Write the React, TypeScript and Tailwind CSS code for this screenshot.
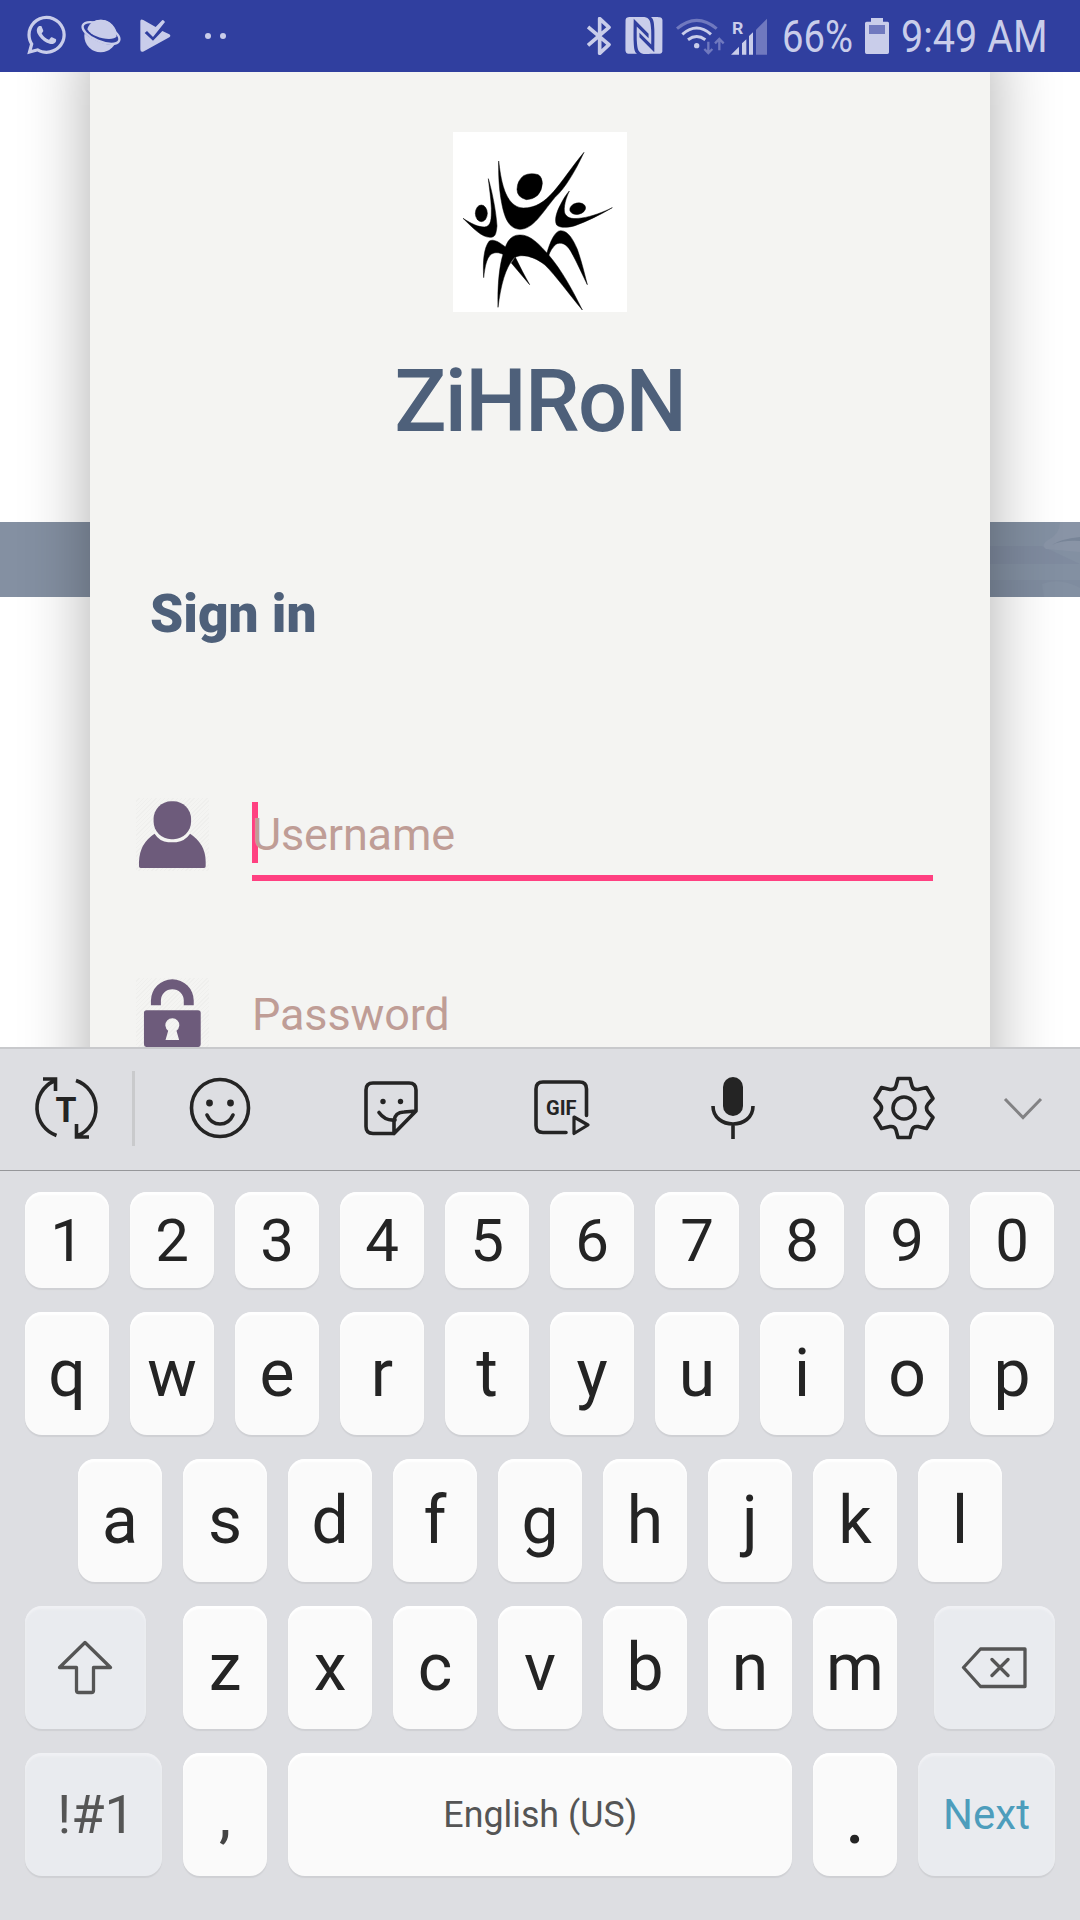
import React from "react";
import { FaWhatsapp } from "react-icons/fa";
import { SiNfc } from "react-icons/si";

const INK = "#242424";
const LIGHT = "#c9cdea";
const DIM = "#7079bf";

/* ---------- status bar ---------- */

function StatusBar() {
  return (
    <header className="flex h-[72px] w-full shrink-0 items-center bg-[#303f9f] text-[#c9cdea]">
      <FaWhatsapp className="ml-[26px] h-[44px] w-[41px] shrink-0 -translate-y-px" />
      <svg className="ml-[13px] h-[34px] w-[42px] shrink-0" viewBox="240 53 126 102">
        <circle cx="302" cy="104" r="49" fill={LIGHT} />
        <ellipse cx="303" cy="98" rx="63" ry="24" transform="rotate(22 303 98)" fill="#303f9f" />
        <path d="M264 78 C275 50 330 43 344 85 L350 105 C340 122 275 110 262 84Z" fill={LIGHT} />
        <ellipse cx="303" cy="95" rx="59" ry="25" transform="rotate(23 303 95)" fill="none" stroke={LIGHT} strokeWidth="7" pathLength="100" strokeDasharray="63 25 12" />
      </svg>
      <svg className="ml-[18px] h-[34px] w-[31px] shrink-0" viewBox="422 55 93 102">
        <path d="M423 62 Q423 53 432 58 L469 79 L487 60 Q491 55 497 64 L461 109 L443 91 L436 97 L461 120 L489 91 L510 101 Q516 105 510 110 L434 152 Q423 157 423 146Z" fill={LIGHT} stroke="none" />
      </svg>
      <div className="ml-[34px] flex gap-[9px]">
        <span className="size-[6px] rounded-full bg-[#c9cdea]" />
        <span className="size-[6px] rounded-full bg-[#c9cdea]" />
      </div>
      <svg className="ml-[361px] h-[38px] w-[24px] shrink-0" viewBox="83 47 72 114">
        <path d="M86 77 L149 130 L121 156 V52 L149 78 L86 132" fill="none" stroke={LIGHT} strokeWidth="11" strokeLinejoin="round" />
      </svg>
      <SiNfc className="ml-[14px] h-[37px] w-[38px] shrink-0 -translate-y-px" />
      <svg className="ml-[13px] h-[37px] w-[49px] shrink-0" viewBox="350 46 147 111">
        <path d="M353 78 Q412 28 472 78" fill="none" stroke={DIM} strokeWidth="9" />
        <path d="M369 95 Q412 57 455 95 M386 111 Q412 92 438 111" fill="none" stroke={LIGHT} strokeWidth="9" />
        <circle cx="412" cy="129" r="8" fill={LIGHT} />
        <path d="M447 117 V149 M435 139 L447 151 L459 139 M480 143 V110 M467 122 L480 109 L493 122" fill="none" stroke={DIM} strokeWidth="7" />
      </svg>
      <svg className="ml-[6px] h-[37px] w-[36px] shrink-0" viewBox="513 46 108 111">
        <path d="M513 156 L537 132 V156Z M546 122 L559 110 V156 H546Z M567 100 L579 89 V156 H567Z" fill={LIGHT} />
        <path d="M588 81 L621 48 V156 H588Z" fill={DIM} />
        <text x="516" y="94" fontFamily="Roboto" fontWeight="700" fontSize="52" textLength="34" lengthAdjust="spacingAndGlyphs" fill={LIGHT}>R</text>
      </svg>
      <span className="ml-[15px] w-[74px] shrink-0 whitespace-nowrap text-[45px] leading-[72px]">
        <span className="inline-block origin-left translate-y-px scale-x-[0.85]">66%</span>
      </span>
      <svg className="ml-[9px] h-[36px] w-[24px] shrink-0" viewBox="915 51 72 108">
        <path d="M933 51 H969 V62 H983 Q987 62 987 67 V154 Q987 159 982 159 H920 Q915 159 915 154 V67 Q915 62 920 62 H933Z" fill={LIGHT} />
        <rect x="927" y="72" width="48" height="27" fill={DIM} />
      </svg>
      <span className="ml-[12px] shrink-0 whitespace-nowrap text-[45px] leading-[72px]">
        <span className="inline-block origin-left translate-y-px scale-x-[0.88]">9:49 AM</span>
      </span>
    </header>
  );
}

/* ---------- sign-in card ---------- */

function Logo() {
  return (
    <svg className="h-[180px] w-[174px] bg-white" viewBox="39 36 522 540" fill="#000" stroke="#000" strokeWidth="1.500">
      <path d="M251 167 Q270 157 295 164 Q307 172 307 190 Q306 212 293 226 Q278 239 259 239 Q231 232 231 208 Q232 181 251 167Z" />
      <path d="M176 123 C182 170 192 262 250 264 C325 264 355 190 432 97 C405 155 375 205 345 232 C305 280 280 327 240 328 C200 326 190 280 182 232 C177 200 175 160 176 123Z" />
      <ellipse cx="124" cy="280" rx="18" ry="25" />
      <path d="M145 176 C155 210 168 270 171 318 C168 345 165 352 150 352 C125 352 100 325 69 295 C95 312 115 321 133 321 C155 320 154 295 154 265 C153 235 148 205 145 176Z" />
      <ellipse cx="413" cy="266" rx="24" ry="17" transform="rotate(-12 413 266)" />
      <path d="M388 213 C372 245 370 275 376 283 C385 297 400 297 425 294 C455 290 490 276 517 263 C480 285 440 304 405 317 C385 323 360 325 350 315 C342 300 350 275 362 253 C370 237 378 224 388 213Z" />
      <path d="M131 473 C128 420 132 385 147 364 C160 354 180 368 199 383 L191 404 C180 398 170 397 162 399 C140 404 135 440 131 473Z" />
      <path d="M214 429 L226 412 C240 440 255 470 269 494Z" />
      <path d="M174 562 C172 500 178 430 192 395 C200 362 215 345 238 345 C270 342 300 375 326 405 C365 450 400 515 427 570 C385 520 350 470 315 435 C285 410 245 400 225 412 C195 440 182 500 174 562Z" />
      <path d="M320 402 C330 365 345 332 362 332 C385 332 400 360 412 388 C425 425 432 455 442 494 C425 460 410 425 393 395 C380 370 360 365 348 373 C337 382 330 395 326 407Z" />
    </svg>
  );
}

const HATCH = "shrink-0 bg-[repeating-linear-gradient(135deg,#f4f4f2_0px,#f4f4f2_2px,#efefed_2px,#efefed_3px)]";

function PersonIcon() {
  return (
    <svg className={`${HATCH} h-[73px] w-[73px]`} viewBox="78 53 220 220" fill="#6d5b7b">
      <path d="M131 161 Q150 189 175 189 H200 Q225 187 244 161 L220 130 H150Z" fill="#f4f4f2" />
      <rect x="131" y="63" width="113" height="114" rx="53" />
      <path d="M134 161 Q150 186 175 186 H200 Q225 184 241 161 Q288 192 288 245 V259 Q288 264 283 264 H92 Q87 264 87 259 V245 Q89 190 134 161Z" />
    </svg>
  );
}

function LockIcon() {
  return (
    <svg className={`${HATCH} h-[73px] w-[73px]`} viewBox="78 593 220 220" fill="#6d5b7b">
      <path d="M123 675 V661 A64.500 64 0 0 1 252 661 V675 H222 V661 A34.500 34 0 0 0 153 661 V675Z" />
      <path
        fillRule="evenodd"
        d="M110 690 H265 Q273 690 273 698 V793 Q273 801 265 801 H110 Q102 801 102 793 V698 Q102 690 110 690Z M175 752 L167 780 H208 L200 752 A21 21 0 1 0 175 752Z"
      />
    </svg>
  );
}

function SignInScreen() {
  return (
    <main className="relative flex h-[975px] w-full shrink-0 justify-center overflow-hidden bg-white">
      <svg className="absolute left-0 top-[450px] h-[75px] w-full" viewBox="0 0 1080 75">
        <rect width="1080" height="75" fill="#8490a2" />
        <path d="M900 0 H1080 V75 H900Z" fill="#8390a2" />
        <path d="M900 24 H1042 L1080 42 H900Z" fill="#7f8b9f" />
        <path d="M900 58 H1080 V75 H900Z" fill="#7f8c9f" />
        <path d="M1060 0 H1080 V30 L1046 27 Q1040 23 1048 18 Q1060 12 1060 0Z" fill="#8994a6" />
        <path d="M1052 23 Q1060 17 1080 15 V19 Q1062 18 1052 23Z" fill="#788598" />
        <path d="M1042 62 Q1060 55 1080 66 V75 H1044Z" fill="#8390a2" />
      </svg>
      <section className="relative flex h-[1180px] w-[900px] -translate-y-[40px] flex-col bg-[#f4f4f2] pt-[100px] shadow-[0_0_64px_rgba(0,0,0,0.32)]">
        <div className="flex flex-col items-center">
          <Logo />
          <h1 className="ml-[-1px] mt-[37px] scale-x-[0.985] text-[88px] font-medium leading-[104px] tracking-[-1.7px] text-[#4e607a]">ZiHRoN</h1>
        </div>
        <h2 className="ml-[60px] mt-[129px] origin-left scale-x-[0.985] text-[54px] font-black leading-[64px] text-[#4e607a]">Sign in</h2>
        <div className="ml-[46px] mt-[152px] flex h-[83px]">
          <PersonIcon />
          <div className="relative ml-[43px] h-[83px] w-[681px] border-b-[6px] border-[#ff4081]">
            <div className="absolute left-0 top-[4px] h-[61px] w-[6px] bg-[#ff4081]" />
            <span className="relative block text-[45px] leading-[73px] tracking-[-0.15px] text-[#bf9d96]">Username</span>
          </div>
        </div>
        <div className="ml-[46px] mt-[97px] flex h-[73px]">
          <LockIcon />
          <span className="ml-[43px] text-[45px] leading-[73px] tracking-[-0.15px] text-[#bf9d96]">Password</span>
        </div>
      </section>
    </main>
  );
}

/* ---------- keyboard ---------- */

function Toolbar() {
  const line = { fill: "none", stroke: INK, strokeWidth: 3.6 } as const;
  return (
    <div className="flex h-[124px] w-full items-center border-b border-t-2 border-b-[#96979a] border-t-[#c8c9cc] pb-[3px]">
      <svg className="ml-[32px] h-[70px] w-[68px]" viewBox="32 1074 68 70">
        <path {...line} d="M56.500 1136.500 A29.500 29.500 0 0 1 54 1082 M43 1080 H55.500 V1092 M76 1081.500 A29.500 29.500 0 0 1 78 1136.500 M76.500 1125 V1138 H89" />
        <text x="55.500" y="1122.500" fontFamily="Roboto" fontWeight="700" fontSize="35" textLength="21" lengthAdjust="spacingAndGlyphs" fill={INK}>T</text>
      </svg>
      <div className="ml-[32px] h-[75px] w-[3px] bg-[#c9cacc]" />
      <svg className="ml-[53px] h-[70px] w-[64px]" viewBox="188 1073 64 70">
        <ellipse {...line} cx="220" cy="1108" rx="28.500" ry="28.500" />
        <circle cx="209.500" cy="1103" r="3.400" fill={INK} />
        <circle cx="230.500" cy="1103" r="3.400" fill={INK} />
        <path {...line} strokeLinecap="round" d="M207 1115 Q211 1124 220 1124 Q229 1124 233 1115" />
      </svg>
      <svg className="ml-[108px] h-[70px] w-[62px]" viewBox="360 1073 62 70">
        <path {...line} strokeLinejoin="round" d="M394 1133.500 H373 Q366 1133.500 366 1126.500 V1090 Q366 1083 373 1083 H409 Q416 1083 416 1090 V1111 L394 1133.500 V1121 Q395 1112 404 1112 L416 1111" />
        <circle cx="383" cy="1101.500" r="2.700" fill={INK} />
        <circle cx="400.500" cy="1101.500" r="2.700" fill={INK} />
        <path {...line} strokeLinecap="round" d="M379 1112.500 Q385 1121 395 1120" />
      </svg>
      <svg className="ml-[108px] h-[70px] w-[64px]" viewBox="530 1073 64 70">
        <path {...line} strokeLinecap="round" d="M566 1132.500 H543 Q536 1132.500 536 1125.500 V1089 Q536 1082 543 1082 H579.500 Q586.500 1082 586.500 1089 V1115.500" />
        <path {...line} strokeWidth="3.200" strokeLinejoin="round" d="M574 1117 L588 1125 L574 1133.500Z" />
        <text x="546" y="1114.500" fontFamily="Roboto" fontWeight="700" fontSize="20" textLength="30.500" lengthAdjust="spacingAndGlyphs" fill={INK}>GIF</text>
      </svg>
      <svg className="ml-[112px] h-[70px] w-[54px]" viewBox="706 1073 54 70">
        <rect x="723" y="1077" width="20" height="39" rx="10" fill={INK} />
        <path {...line} d="M713 1106 C713 1130 753 1130 753 1106 M733 1124 V1139" />
      </svg>
      <svg className="ml-[110px] h-[70px] w-[68px]" viewBox="870 1073 68 70">
        <path
          {...line}
          strokeLinejoin="round"
          d="M898 1078.500 H910 L912 1086 Q913 1090 918 1089.500 L926.500 1087.500 L933 1098.500 L928 1104 Q925 1108 928 1112 L933 1117.500 L926.500 1128.500 L918 1126.500 Q913 1126 912 1130 L910 1137.500 H898 L896 1130 Q895 1126 890 1126.500 L881.500 1128.500 L875 1117.500 L880 1112 Q883 1108 880 1104 L875 1098.500 L881.500 1087.500 L890 1089.500 Q895 1090 896 1086Z"
        />
        <circle {...line} cx="904" cy="1108" r="11" />
      </svg>
      <svg className="ml-[62px] h-[70px] w-[46px]" viewBox="1000 1073 46 70">
        <path d="M1005 1099 L1023 1117.500 L1041 1099" fill="none" stroke="#828284" strokeWidth="3" />
      </svg>
    </div>
  );
}

const KEY =
  "flex h-full shrink-0 items-center justify-center rounded-[17px] bg-[#fafafa] text-[#242424] shadow-[0_2px_1px_#cfd0d4,inset_0_3px_2px_#ffffff]";
const FN_KEY =
  "flex h-full shrink-0 items-center justify-center rounded-[17px] bg-[#e9ebef] text-[#555555] shadow-[0_2px_1px_#cfd0d4,inset_0_3px_2px_#f0f1f4]";

function Letters({ keys }: { keys: string }) {
  return (
    <>
      {keys.split("").map((k) => (
        <div key={k} className={`${KEY} w-[84px] text-[66px] leading-none`}>
          {k}
        </div>
      ))}
    </>
  );
}

function Keyboard() {
  return (
    <div className="flex h-[873px] w-full shrink-0 flex-col bg-[#dddee2]">
      <Toolbar />
      <div className="flex flex-col gap-[24px] px-[25px] pt-[21px]">
        <div className="flex h-[96px] gap-[21px]">
          {"1234567890".split("").map((k) => (
            <div key={k} className={`${KEY} w-[84px] pt-[2px] text-[60px] leading-none`}>
              {k}
            </div>
          ))}
        </div>
        <div className="flex h-[123px] gap-[21px]">
          <Letters keys="qwertyuiop" />
        </div>
        <div className="flex h-[123px] justify-center gap-[21px]">
          <Letters keys="asdfghjkl" />
        </div>
        <div className="flex h-[123px] justify-between">
          <div className={`${FN_KEY} w-[121px]`}>
            <svg className="h-[60px] w-[60px] -translate-x-px" viewBox="55.500 1637.500 60 60">
              <path d="M85.500 1642 L111 1667 H94 V1690 Q94 1692 92 1692 H79 Q77 1692 77 1690 V1667 H60Z" fill="none" stroke="#555" strokeWidth="3.300" strokeLinejoin="round" />
            </svg>
          </div>
          <div className="flex gap-[21px]">
            <Letters keys="zxcvbnm" />
          </div>
          <div className={`${FN_KEY} w-[121px]`}>
            <svg className="h-[50px] w-[74px] -translate-x-px" viewBox="957.500 1642.500 74 50">
              <path d="M981 1648.500 H1025.500 V1686 H981 L964 1667Z M992.500 1659 L1008.500 1675 M1008.500 1659 L992.500 1675" fill="none" stroke="#555" strokeWidth="3.300" strokeLinejoin="round" strokeLinecap="round" />
            </svg>
          </div>
        </div>
        <div className="flex h-[123px] gap-[21px]">
          <div className={`${FN_KEY} w-[137px] pl-[5px] text-[54px]`}>!#1</div>
          <div className={`${KEY} w-[84px] text-[54px]`}>
            <span className="translate-y-[3px] font-medium text-[#444444]">,</span>
          </div>
          <div className={`${KEY} w-[504px] text-[37px]`}>
            <span className="scale-x-[0.967] whitespace-nowrap text-[#555555]">English (US)</span>
          </div>
          <div className={`${KEY} w-[84px] text-[66px]`}>
            <span className="translate-y-[6px] font-medium">.</span>
          </div>
          <div className={`${FN_KEY} w-[137px] text-[42px]`}>
            <span className="text-[#4d9dbc]">Next</span>
          </div>
        </div>
      </div>
    </div>
  );
}

export default function App() {
  return (
    <div className="flex h-[1920px] w-[1080px] flex-col overflow-hidden font-[Roboto,sans-serif]">
      <StatusBar />
      <SignInScreen />
      <Keyboard />
    </div>
  );
}
